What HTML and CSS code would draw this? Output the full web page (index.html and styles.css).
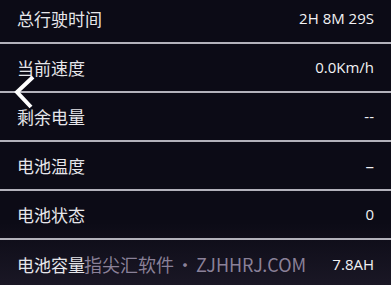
FILE: index.html
```html
<!DOCTYPE html>
<html lang="zh">
<head>
<meta charset="utf-8">
<link rel="stylesheet" href="styles.css">
</head>
<body>
<div class="screen">
  <ul class="list">
    <li class="row"><span class="label">总行驶时间</span><span class="value">2H 8M 29S</span></li>
    <li class="row"><span class="label">当前速度</span><span class="value">0.0Km/h</span></li>
    <li class="row"><span class="label">剩余电量</span><span class="value">--</span></li>
    <li class="row"><span class="label">电池温度</span><span class="value dash">–</span></li>
    <li class="row"><span class="label">电池状态</span><span class="value">0</span></li>
    <li class="row last"><span class="label">电池容量</span><span class="value">7.8AH</span></li>
  </ul>
  <svg class="back" width="24" height="34" viewBox="0 0 24 34" aria-hidden="true">
    <polyline points="20,2 4,17 18,32" fill="none" stroke="#ffffff" stroke-width="4" stroke-linecap="butt" stroke-linejoin="miter"/>
  </svg>
  <div class="watermark">指尖汇软件 • ZJHHRJ.COM</div>
</div>
</body>
</html>
```
FILE: styles.css
```css
* { box-sizing: border-box; }
html, body {
  margin: 0;
  padding: 0;
  background: #0c0b16;
}
.screen {
  position: relative;
  width: 391px;
  height: 285px;
  overflow: hidden;
  background: linear-gradient(to bottom, #0c0b16 0%, #0c0b16 78%, #1a1725 100%);
}
.list {
  list-style: none;
  margin: -5px 0 0 0;
  padding: 0;
}
.row {
  height: 49px;
  display: flex;
  align-items: center;
  justify-content: space-between;
  padding: 0 17px 0 17px;
  border-bottom: 2px solid #b3b2bb;
}
.row.last { border-bottom: none; }
.label {
  font-family: "Noto Sans CJK SC", "Noto Sans", sans-serif;
  font-size: 17px;
  color: #e6e6ea;
  line-height: 1;
}
.value {
  font-family: "Open Sans", "Noto Sans", sans-serif;
  font-size: 15px;
  color: #f2f2f4;
  line-height: 1;
}
.value.dash { font-size: 17px; }
.back {
  position: absolute;
  left: 13px;
  top: 75px;
}
.watermark {
  position: absolute;
  left: 84px;
  top: 252px;
  font-family: "Noto Sans CJK SC", "Open Sans", sans-serif;
  font-size: 18px;
  line-height: 24px;
  color: rgba(160, 150, 175, 0.85);
  white-space: nowrap;
  word-spacing: -2px;
}
```
